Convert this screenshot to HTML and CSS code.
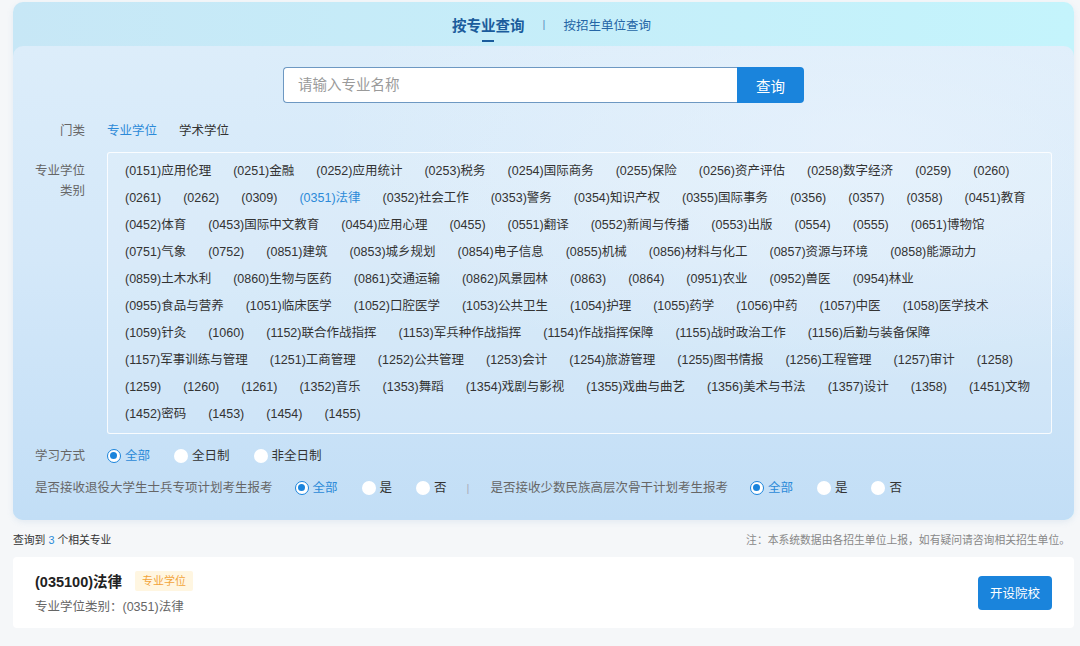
FILE: index.html
```html
<!DOCTYPE html>
<html lang="zh-CN">
<head>
    <meta charset="UTF-8">
    <title>专业查询</title>
    <link rel="stylesheet" href="styles.css">
</head>
<body>
<div class="page">
    <div class="panel">
        <!-- tabs -->
        <div class="tabs">
            <span class="tab active">按专业查询</span>
            <span class="tab-sep">|</span>
            <span class="tab">按招生单位查询</span>
        </div>

        <div class="panel-body">
            <div class="search">
                <input class="search-input" type="text" placeholder="请输入专业名称">
                <button class="search-btn">查询</button>
            </div>

            <div class="filter-row">
                <div class="filter-label">门类</div>
                <div class="filter-opts">
                    <span class="opt active">专业学位</span>
                    <span class="opt">学术学位</span>
                </div>
            </div>

            <div class="filter-row cat-row">
                <div class="filter-label">专业学位<br>类别</div>
                <div class="cat-box">
                    <div class="cat-line"><span>(0151)应用伦理</span><span>(0251)金融</span><span>(0252)应用统计</span><span>(0253)税务</span><span>(0254)国际商务</span><span>(0255)保险</span><span>(0256)资产评估</span><span>(0258)数字经济</span><span>(0259)</span><span>(0260)</span></div>
                    <div class="cat-line"><span>(0261)</span><span>(0262)</span><span>(0309)</span><span class="active">(0351)法律</span><span>(0352)社会工作</span><span>(0353)警务</span><span>(0354)知识产权</span><span>(0355)国际事务</span><span>(0356)</span><span>(0357)</span><span>(0358)</span><span>(0451)教育</span></div>
                    <div class="cat-line"><span>(0452)体育</span><span>(0453)国际中文教育</span><span>(0454)应用心理</span><span>(0455)</span><span>(0551)翻译</span><span>(0552)新闻与传播</span><span>(0553)出版</span><span>(0554)</span><span>(0555)</span><span>(0651)博物馆</span></div>
                    <div class="cat-line"><span>(0751)气象</span><span>(0752)</span><span>(0851)建筑</span><span>(0853)城乡规划</span><span>(0854)电子信息</span><span>(0855)机械</span><span>(0856)材料与化工</span><span>(0857)资源与环境</span><span>(0858)能源动力</span></div>
                    <div class="cat-line"><span>(0859)土木水利</span><span>(0860)生物与医药</span><span>(0861)交通运输</span><span>(0862)风景园林</span><span>(0863)</span><span>(0864)</span><span>(0951)农业</span><span>(0952)兽医</span><span>(0954)林业</span></div>
                    <div class="cat-line"><span>(0955)食品与营养</span><span>(1051)临床医学</span><span>(1052)口腔医学</span><span>(1053)公共卫生</span><span>(1054)护理</span><span>(1055)药学</span><span>(1056)中药</span><span>(1057)中医</span><span>(1058)医学技术</span></div>
                    <div class="cat-line"><span>(1059)针灸</span><span>(1060)</span><span>(1152)联合作战指挥</span><span>(1153)军兵种作战指挥</span><span>(1154)作战指挥保障</span><span>(1155)战时政治工作</span><span>(1156)后勤与装备保障</span></div>
                    <div class="cat-line"><span>(1157)军事训练与管理</span><span>(1251)工商管理</span><span>(1252)公共管理</span><span>(1253)会计</span><span>(1254)旅游管理</span><span>(1255)图书情报</span><span>(1256)工程管理</span><span>(1257)审计</span><span>(1258)</span></div>
                    <div class="cat-line"><span>(1259)</span><span>(1260)</span><span>(1261)</span><span>(1352)音乐</span><span>(1353)舞蹈</span><span>(1354)戏剧与影视</span><span>(1355)戏曲与曲艺</span><span>(1356)美术与书法</span><span>(1357)设计</span><span>(1358)</span><span>(1451)文物</span></div>
                    <div class="cat-line"><span>(1452)密码</span><span>(1453)</span><span>(1454)</span><span>(1455)</span></div>
                </div>
            </div>

            <div class="filter-row radio-row">
                <div class="filter-label">学习方式</div>
                <div class="filter-opts">
                    <label class="radio checked"><i></i>全部</label>
                    <label class="radio"><i></i>全日制</label>
                    <label class="radio"><i></i>非全日制</label>
                </div>
            </div>

            <div class="filter-row radio-row free">
                <div class="free-label">是否接收退役大学生士兵专项计划考生报考</div>
                <div class="filter-opts">
                    <label class="radio checked"><i></i>全部</label>
                    <label class="radio"><i></i>是</label>
                    <label class="radio"><i></i>否</label>
                </div>
                <span class="row-sep">|</span>
                <div class="free-label">是否接收少数民族高层次骨干计划考生报考</div>
                <div class="filter-opts">
                    <label class="radio checked"><i></i>全部</label>
                    <label class="radio"><i></i>是</label>
                    <label class="radio"><i></i>否</label>
                </div>
            </div>
        </div>
    </div>

    <div class="result-bar">
        <span>查询到 <b>3</b> 个相关专业</span>
        <span class="note">注：本系统数据由各招生单位上报，如有疑问请咨询相关招生单位。</span>
    </div>

    <div class="card">
        <div class="card-info">
            <div class="card-title">(035100)法律 <span class="tag">专业学位</span></div>
            <div class="card-sub">专业学位类别：(0351)法律</div>
        </div>
        <button class="card-btn">开设院校</button>
    </div>
</div>
</body>
</html>
```

FILE: styles.css
```css
* {
    margin: 0;
    padding: 0;
    box-sizing: border-box;
}

body {
    font-family: "Liberation Sans", "Noto Sans CJK SC", sans-serif;
    background-color: #f5f7f9;
    color: #333;
    font-size: 12.5px;
}

.page {
    padding: 2px 6px 0 13px;
}

.panel {
    border-radius: 10px;
    overflow: hidden;
    background: linear-gradient(90deg, #c7e7f6, #c4f4fc);
    box-shadow: 0 2px 6px rgba(120, 160, 200, 0.15);
}

/* tabs */
.tabs {
    height: 44px;
    display: flex;
    justify-content: center;
    align-items: center;
    gap: 18px;
    padding-left: 16px;
}

.tab {
    font-size: 12.5px;
    color: #2566a6;
    position: relative;
}

.tab.active {
    font-size: 14.5px;
    font-weight: bold;
    color: #1b5c9c;
}

.tab.active::after {
    content: "";
    position: absolute;
    left: 50%;
    bottom: -7px;
    width: 12px;
    height: 2px;
    margin-left: -6px;
    background-color: #1b5c9c;
}

.tab-sep {
    color: #5a8fc0;
    font-size: 11px;
}

.panel-body {
    border-radius: 10px 10px 0 0;
    background:
        radial-gradient(ellipse at 80% 20%, rgba(236, 244, 253, 0.6), rgba(236, 244, 253, 0) 45%),
        linear-gradient(180deg, #dcedfa 0%, #d4e8f9 45%, #c2def6 100%);
    padding: 21px 0 22px;
}

/* search */
.search {
    display: flex;
    justify-content: center;
    margin-bottom: 18px;
}

.search-input {
    width: 454px;
    height: 36px;
    border: 1px solid #6d98c2;
    border-right: none;
    border-radius: 4px 0 0 4px;
    padding: 0 14px;
    font-size: 14.5px;
    font-family: inherit;
    background: #fff;
    outline: none;
}

.search-input::placeholder {
    color: #9a9a9a;
}

.search-btn {
    width: 67px;
    height: 36px;
    border: none;
    border-radius: 0 4px 4px 0;
    background-color: #1a84dc;
    color: #fff;
    font-size: 14.5px;
    font-family: inherit;
}

/* filter rows */
.filter-row {
    display: flex;
    align-items: center;
    line-height: 20px;
    margin-bottom: 11px;
}

.filter-label {
    width: 72px;
    text-align: right;
    color: #666;
    margin-right: 22px;
    flex-shrink: 0;
}

.filter-opts {
    display: flex;
    gap: 22px;
}

.opt.active {
    color: #2c8ad8;
}

.cat-row {
    align-items: flex-start;
}

.cat-row .filter-label {
    padding-top: 9px;
}

.cat-box {
    width: 945px;
    border: 1px solid rgba(255, 255, 255, 0.85);
    border-radius: 3px;
    background-color: rgba(255, 255, 255, 0.12);
    padding: 5px 17px;
}

.cat-line {
    display: flex;
    gap: 22px;
    line-height: 27px;
    white-space: nowrap;
}

.cat-line .active {
    color: #2c8ad8;
}

/* radios */
.radio-row {
    margin-top: 12px;
    margin-bottom: 12px;
}

.radio-row:last-child {
    margin-bottom: 0;
}

.radio-row .filter-opts {
    gap: 24px;
}

.radio {
    display: flex;
    align-items: center;
    gap: 4px;
    color: #333;
}

.radio i {
    width: 14px;
    height: 14px;
    border-radius: 50%;
    background-color: #fff;
    position: relative;
}

.radio.checked {
    color: #2c8ad8;
}

.radio.checked i {
    border: 1.5px solid #1a84dc;
}

.radio.checked i::after {
    content: "";
    position: absolute;
    left: 2px;
    top: 2px;
    width: 7px;
    height: 7px;
    border-radius: 50%;
    background-color: #1a84dc;
}

.free {
    padding-left: 22px;
}

.free-label {
    color: #666;
    margin-right: 22px;
}

.row-sep {
    color: #aab;
    font-size: 11px;
    margin: 0 21px 0 20px;
}

/* results */
.result-bar {
    display: flex;
    justify-content: space-between;
    align-items: center;
    font-size: 10.8px;
    height: 37px;
    padding-right: 4px;
}

.result-bar b {
    font-weight: normal;
    color: #2c8ad8;
}

.note {
    color: #888;
}

.card {
    background-color: #fff;
    border-radius: 4px;
    height: 71px;
    display: flex;
    justify-content: space-between;
    align-items: center;
    padding: 0 22px;
}

.card-title {
    font-size: 14.5px;
    font-weight: bold;
    color: #222;
    display: flex;
    align-items: center;
}

.tag {
    font-size: 11px;
    font-weight: normal;
    color: #f2a43a;
    background-color: #fff6e1;
    padding: 0 7px;
    line-height: 20px;
    margin-left: 13px;
    border-radius: 2px;
}

.card-sub {
    font-size: 12.5px;
    color: #666;
    margin-top: 5px;
}

.card-btn {
    width: 74px;
    height: 34px;
    border: none;
    border-radius: 4px;
    background-color: #1a84dc;
    color: #fff;
    font-size: 12.5px;
    font-family: inherit;
}
```
